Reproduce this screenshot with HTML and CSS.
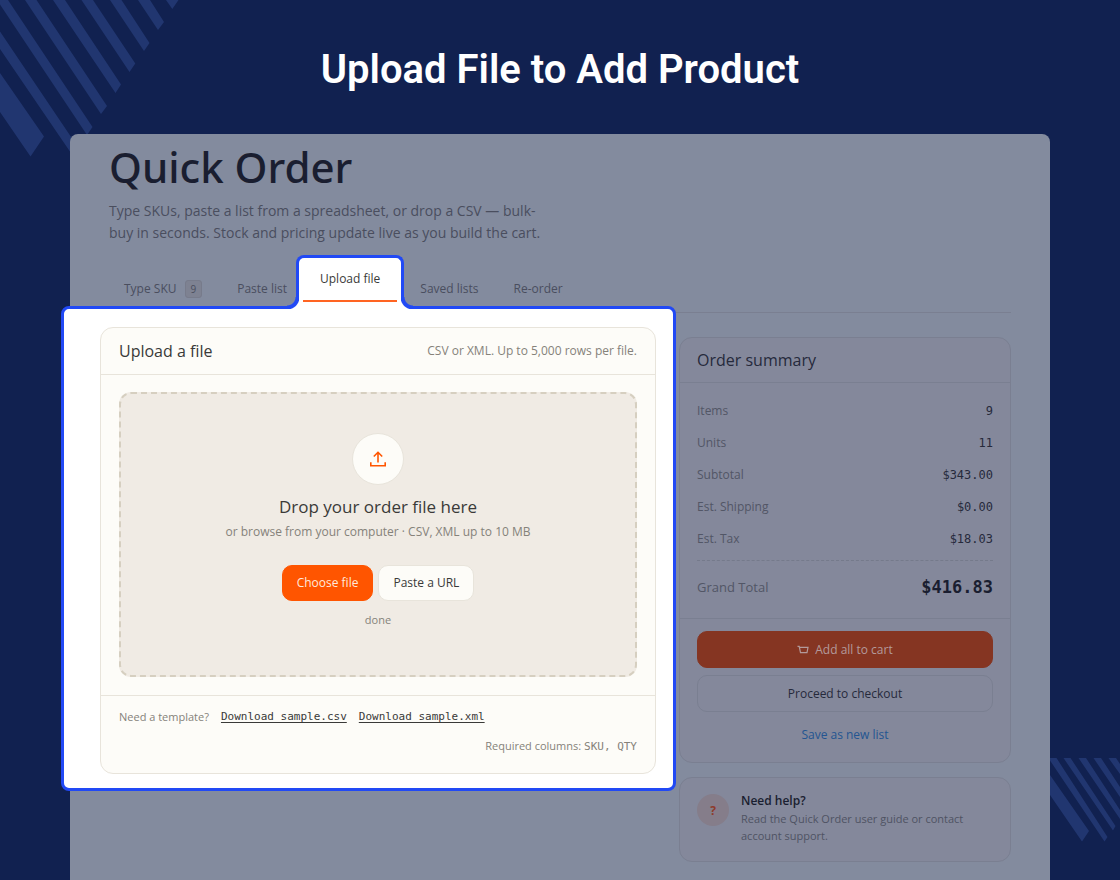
FILE: index.html
```html
<!DOCTYPE html>
<html lang="en">
<head>
<meta charset="utf-8">
<meta name="viewport" content="width=device-width, initial-scale=1">
<title>Upload File to Add Product</title>
<link rel="stylesheet" href="styles.css">
</head>
<body>
<div class="stage">
  <svg class="stripes stripes-top" width="180" height="160" viewBox="0 0 180 160" aria-hidden="true">
    <path d="M0 73 44 136.5 30.5 156.500 0 112ZM0 31.500 78.500 148 73 156 0 49ZM0 0H8L92.500 127 87 135 0 4.500ZM25 0H36.500L107 106 101 114ZM53 0H65L121 84.500 115.500 93ZM81.500 0H93L135.300 63.500 129.500 72ZM110 0H121.500L149.500 43 144 51ZM138 0H150L164 22 158 30ZM166 0H178.500L172.300 9Z"/>
  </svg>
  <svg class="stripes stripes-bottom" width="70" height="84" viewBox="0 0 70 84" aria-hidden="true">
    <path d="M0 17 39 73 32 83.500 0 37ZM0 0H6.500L57.500 79 54.500 83.500 0 2.500ZM13.500 0H20.500L65.500 68 63 72.500ZM28.500 0H36L70 52V61ZM43.500 0H51L70 29V39ZM58.500 0H66L70 6V16Z"/>
  </svg>

  <h1 class="stage-title">Upload File to Add Product</h1>

  <main class="panel">
    <header>
      <h2 class="page-title">Quick Order</h2>
      <p class="page-intro">Type SKUs, paste a list from a spreadsheet, or drop a CSV — bulk-buy in seconds. Stock and pricing update live as you build the cart.</p>
    </header>

    <div class="tabs" role="tablist">
      <button class="tab" type="button" role="tab">Type SKU <span class="badge">9</span></button>
      <button class="tab" type="button" role="tab">Paste list</button>
      <button class="tab tab-active" type="button" role="tab" aria-selected="true"><span class="tab-label">Upload file</span></button>
      <button class="tab" type="button" role="tab">Saved lists</button>
      <button class="tab" type="button" role="tab">Re-order</button>
    </div>

    <div class="columns">
      <section class="spotlight">
        <div class="card upload">
          <div class="card-head">
            <h3 class="card-title">Upload a file</h3>
            <span class="small">CSV or XML. Up to 5,000 rows per file.</span>
          </div>
          <div class="upload-body">
            <div class="dropzone">
              <span class="drop-icon">
                <svg width="18" height="18" viewBox="0 0 18 18" fill="none" stroke="currentColor" stroke-width="1.600" aria-hidden="true"><path d="M9 12.500V2.500M4.800 6.500 9 2.300 13.200 6.500M1.800 12.200V15.800H16.200V12.200"/></svg>
              </span>
              <h4 class="drop-title">Drop your order file here</h4>
              <p class="drop-text">or browse from your computer · CSV, XML up to 10 MB</p>
              <div class="drop-actions">
                <button class="btn btn-primary" type="button">Choose file</button>
                <button class="btn" type="button">Paste a URL</button>
              </div>
              <p class="drop-status">done</p>
            </div>
          </div>
          <div class="upload-foot">
            <span>Need a template?</span>
            <a class="mono" href="#csv">Download sample.csv</a>
            <a class="mono" href="#xml">Download sample.xml</a>
            <span class="required">Required columns: <code class="mono">SKU, QTY</code></span>
          </div>
        </div>
      </section>

      <aside class="side">
        <section class="card dim">
          <div class="card-head">
            <h3 class="card-title">Order summary</h3>
          </div>
          <dl class="totals">
            <div class="row"><dt>Items</dt><dd>9</dd></div>
            <div class="row"><dt>Units</dt><dd>11</dd></div>
            <div class="row"><dt>Subtotal</dt><dd>$343.00</dd></div>
            <div class="row"><dt>Est. Shipping</dt><dd>$0.00</dd></div>
            <div class="row"><dt>Est. Tax</dt><dd>$18.03</dd></div>
            <div class="row row-grand"><dt>Grand Total</dt><dd>$416.83</dd></div>
          </dl>
          <div class="checkout">
            <button class="btn btn-cart" type="button">
              <svg width="12" height="12" viewBox="0 0 12 12" fill="none" stroke="currentColor" stroke-width="1.200" aria-hidden="true"><path d="M0.500 2.300H2.200L3.500 8.600H10L11 3.300H2.500"/></svg>
              Add all to cart
            </button>
            <button class="btn btn-outline" type="button">Proceed to checkout</button>
            <a class="save-link" href="#save">Save as new list</a>
          </div>
        </section>

        <section class="card dim help">
          <span class="help-icon" aria-hidden="true">?</span>
          <div>
            <h3 class="help-title">Need help?</h3>
            <p class="help-text">Read the Quick Order user guide or contact account support.</p>
          </div>
        </section>
      </aside>
    </div>
  </main>
</div>
</body>
</html>
```

FILE: styles.css
```css
:root {
  --navy: #112150;
  --stripe: #213670;
  --panel: #838b9e;
  --dim-card: #84889b;
  --dim-line: #7a7f91;
  --blue: #2149f5;
  --orange: #ff5500;
  --cream: #fdfcf8;
  --line: #e8e4db;
  --ink: #3a3a38;
  --muted: #85827a;
  --sans: "Open Sans", "Noto Sans", sans-serif;
  --mono: "DejaVu Sans Mono", monospace;
}

* {
  box-sizing: border-box;
}

body,
h1,
h2,
h3,
h4,
p,
dl,
dd {
  margin: 0;
}

body {
  background: var(--navy);
  font-family: var(--sans);
  color: var(--ink);
}

button {
  font-family: inherit;
  cursor: pointer;
}

.stage {
  position: relative;
  display: flex;
  flex-direction: column;
  min-height: 100vh;
  padding: 0 70px;
  overflow: hidden;
}

.stripes {
  position: absolute;
  fill: var(--stripe);
}

.stripes-top {
  top: 0;
  left: 0;
}

.stripes-bottom {
  right: 0;
  bottom: 38px;
}

.stage-title {
  padding: 46px 0 40px;
  font: 600 40px/48px Roboto, sans-serif;
  text-align: center;
  color: #fff;
}

.panel {
  position: relative;
  flex: 1;
  padding: 9px 39px 18px;
  border-radius: 8px 8px 0 0;
  background: var(--panel);
}

.page-title {
  font-family: "Noto Sans", sans-serif;
  font-size: 42px;
  line-height: 48px;
  font-weight: 500;
  color: #1a1e30;
}

.page-intro {
  max-width: 440px;
  margin-top: 9px;
  font-size: 14px;
  line-height: 22px;
  color: #4a4e5e;
}

/* Tabs */
.tabs {
  display: flex;
  align-items: flex-end;
  gap: 5px;
  height: 47px;
  margin-top: 22px;
  border-bottom: 1px solid var(--dim-line);
}

.tab {
  display: flex;
  align-items: center;
  gap: 8px;
  height: 46px;
  padding: 0 15px;
  border: 0;
  background: none;
  font-size: 12px;
  line-height: 22px;
  white-space: nowrap;
  color: #4a4e5e;
}

.badge {
  padding: 0 5px;
  border: 1px solid #777b8b;
  border-radius: 3px;
  background: #7e8292;
  font-size: 10px;
  line-height: 16px;
}

.tab-active {
  position: relative;
  z-index: 2;
  align-items: flex-start;
  height: 54px;
  margin: 0 -4px 3px -11px;
  padding: 10px 4px 0;
  border: 3px solid var(--blue);
  border-bottom: 0;
  border-radius: 8px 8px 0 0;
  background: #fff;
  color: var(--ink);
}

.tab-label {
  padding: 0 17px 10px;
  border-bottom: 2px solid #ff6422;
}

/* Concave joints between the active tab and the spotlight frame */
.tab-active::before,
.tab-active::after {
  content: "";
  position: absolute;
  bottom: 0;
  width: 12px;
  height: 12px;
}

.tab-active::before {
  right: 100%;
  background: radial-gradient(circle at 0 0, var(--panel) 8px, var(--blue) 9px, var(--blue) 12px, #fff 13px);
}

.tab-active::after {
  left: 100%;
  background: radial-gradient(circle at 100% 0, var(--panel) 8px, var(--blue) 9px, var(--blue) 12px, #fff 13px);
}

/* Columns */
.columns {
  display: grid;
  grid-template-columns: minmax(0, 1fr) 332px;
  align-items: start;
  gap: 3px;
  margin: -7px 0 0 -48px;
}

.spotlight {
  position: relative;
  z-index: 1;
  padding: 18px 17px 14px 36px;
  border: 3px solid var(--blue);
  border-radius: 8px;
  background: #fff;
}

.card {
  border: 1px solid var(--line);
  border-radius: 13px;
  background: var(--cream);
}

.card-head {
  display: flex;
  align-items: center;
  justify-content: space-between;
  padding: 11px 18px;
  border-bottom: 1px solid var(--line);
}

.card-title {
  font-size: 16px;
  line-height: 24px;
  font-weight: 400;
}

.small {
  font-size: 12px;
  line-height: 20px;
  color: var(--muted);
}

.upload-body {
  padding: 17px 18px 18px;
}

.dropzone {
  display: flex;
  flex-direction: column;
  align-items: center;
  padding: 39px 16px 45px;
  border: 2px dashed #d6cfc0;
  border-radius: 12px;
  background: #f0ebe4;
  text-align: center;
}

.drop-icon {
  display: grid;
  place-items: center;
  width: 52px;
  height: 52px;
  border: 1px solid var(--line);
  border-radius: 50%;
  background: var(--cream);
  color: var(--orange);
}

.drop-title {
  margin-top: 11px;
  font-size: 17px;
  line-height: 22px;
  font-weight: 400;
}

.drop-text {
  margin-top: 4px;
  font-size: 12px;
  line-height: 20px;
  color: var(--muted);
}

.drop-actions {
  display: flex;
  gap: 5px;
  margin-top: 23px;
}

.drop-status {
  margin-top: 9px;
  font-size: 11px;
  line-height: 20px;
  color: var(--muted);
}

.btn {
  padding: 8px 14px;
  border: 1px solid var(--line);
  border-radius: 10px;
  background: var(--cream);
  font-size: 12px;
  line-height: 18px;
  color: var(--ink);
}

.btn-primary {
  border-color: var(--orange);
  background: var(--orange);
  color: #ffe9dc;
}

.upload-foot {
  display: flex;
  flex-wrap: wrap;
  align-items: center;
  gap: 11px 12px;
  padding: 12px 18px 17px;
  border-top: 1px solid var(--line);
  font-size: 11px;
  line-height: 18px;
  color: var(--muted);
}

.upload-foot a {
  color: var(--ink);
  text-underline-offset: 2px;
}

.mono {
  font-family: var(--mono);
  font-size: 11px;
}

.required {
  flex-basis: 100%;
  text-align: right;
}

/* Sidebar */
.side {
  display: grid;
  gap: 14px;
  padding-top: 31px;
}

.dim {
  border-color: var(--dim-line);
  background: var(--dim-card);
  color: #262a3b;
}

.dim .card-head {
  padding: 10px 17px;
  border-color: var(--dim-line);
}

.totals {
  padding: 12px 17px 15px;
  border-bottom: 1px solid var(--dim-line);
}

.row {
  display: flex;
  align-items: center;
  justify-content: space-between;
  padding: 6px 0;
  font-size: 12px;
  line-height: 20px;
}

.row dt {
  color: #525666;
}

.row dd {
  font-family: var(--mono);
}

.row-grand {
  margin-top: 5px;
  padding: 16px 0 6px;
  border-top: 1px dashed #757a8b;
  font-size: 13px;
}

.row-grand dd {
  font-size: 17px;
  font-weight: 700;
  color: #1a1e30;
}

.checkout {
  display: grid;
  gap: 7px;
  padding: 12px 17px 11px;
}

.checkout .btn {
  display: flex;
  align-items: center;
  justify-content: center;
  gap: 6px;
  height: 37px;
}

.checkout .btn-cart {
  border-color: #853522;
  background: #853522;
  color: #b39a9b;
}

.checkout .btn-outline {
  border-color: var(--dim-line);
  background: none;
  color: #262a3b;
}

.save-link {
  padding: 6px 0;
  font-size: 12px;
  line-height: 20px;
  text-align: center;
  text-decoration: none;
  color: #235591;
}

.help {
  display: flex;
  gap: 12px;
  padding: 14px 17px 17px;
}

.help-icon {
  display: grid;
  flex: none;
  place-items: center;
  width: 32px;
  height: 32px;
  margin-top: 2px;
  border-radius: 50%;
  background: #857d8a;
  font-size: 12px;
  font-weight: 700;
  color: #8e3b2c;
}

.help-title {
  font-size: 12px;
  line-height: 18px;
  font-weight: 600;
  color: #1a1e30;
}

.help-text {
  font-size: 11px;
  line-height: 17px;
  color: #4f5363;
}
```
